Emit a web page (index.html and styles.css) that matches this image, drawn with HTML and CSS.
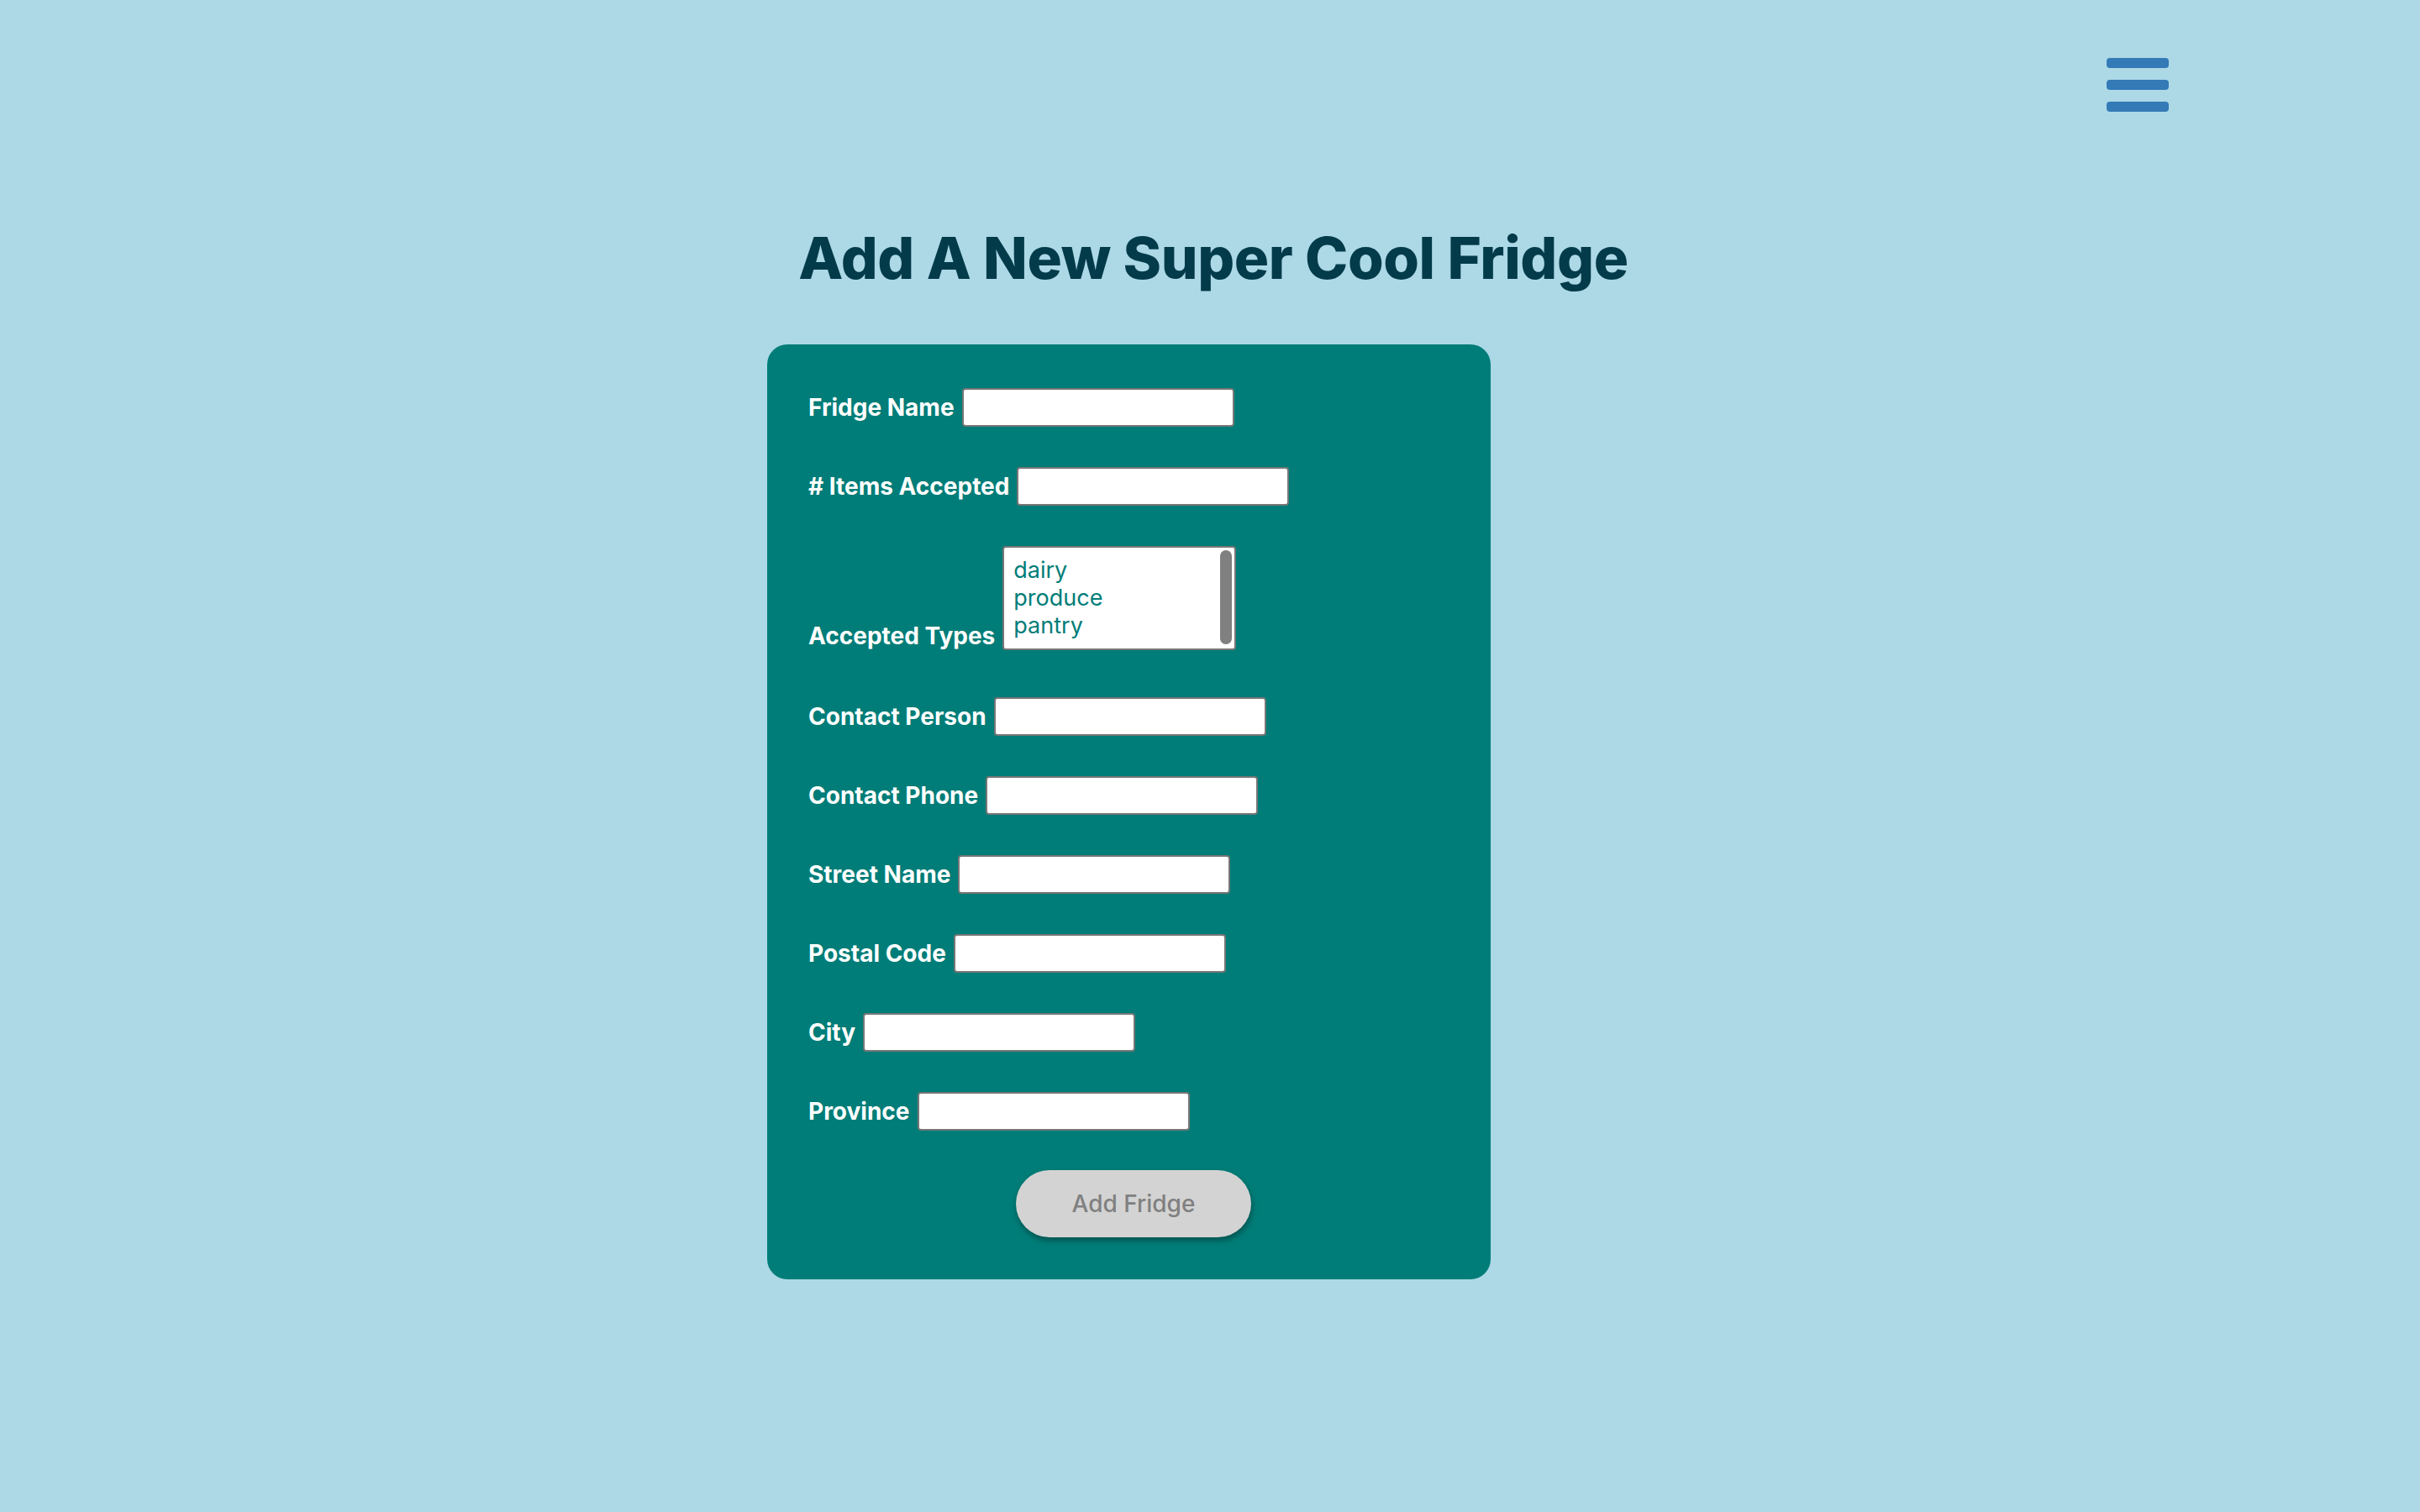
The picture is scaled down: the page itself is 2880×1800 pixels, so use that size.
FILE: index.html
```html
<!DOCTYPE html>
<html lang="en">
<head>
<meta charset="utf-8">
<title>Add A New Super Cool Fridge</title>
<link rel="stylesheet" href="styles.css">
</head>
<body>
<header class="topbar">
  <button class="menu-toggle" aria-label="Menu">
    <span class="bar"></span>
    <span class="bar"></span>
    <span class="bar"></span>
  </button>
</header>
<main>
  <h1 class="title">Add A New Super Cool Fridge</h1>
  <form class="fridge-form">
    <div class="row">
      <label class="label" for="name">Fridge Name</label>
      <input class="field" id="name" type="text">
    </div>
    <div class="row">
      <label class="label" for="items"># Items Accepted</label>
      <input class="field" id="items" type="text">
    </div>
    <div class="row row-select">
      <label class="label">Accepted Types</label>
      <div class="listbox" role="listbox" aria-multiselectable="true">
        <div class="option" role="option">dairy</div>
        <div class="option" role="option">produce</div>
        <div class="option" role="option">pantry</div>
        <span class="thumb"></span>
      </div>
    </div>
    <div class="row">
      <label class="label" for="person">Contact Person</label>
      <input class="field" id="person" type="text">
    </div>
    <div class="row">
      <label class="label" for="phone">Contact Phone</label>
      <input class="field" id="phone" type="text">
    </div>
    <div class="row">
      <label class="label" for="street">Street Name</label>
      <input class="field" id="street" type="text">
    </div>
    <div class="row">
      <label class="label" for="postal">Postal Code</label>
      <input class="field" id="postal" type="text">
    </div>
    <div class="row">
      <label class="label" for="city">City</label>
      <input class="field" id="city" type="text">
    </div>
    <div class="row">
      <label class="label" for="province">Province</label>
      <input class="field" id="province" type="text">
    </div>
    <button class="submit" type="button">Add Fridge</button>
  </form>
</main>
</body>
</html>
```
FILE: styles.css
```css
* { box-sizing: border-box; }

body {
  margin: 0;
  background: #add8e6;
  font-family: "Inter", "Noto Sans", sans-serif;
  min-height: 1800px;
}

.topbar {
  display: flex;
  justify-content: flex-end;
  padding: 69px 299px 0 0;
}

.menu-toggle {
  display: flex;
  flex-direction: column;
  gap: 14px;
  width: 74px;
  padding: 0;
  border: 0;
  background: none;
}

.bar {
  display: block;
  width: 74px;
  height: 12px;
  border-radius: 4px;
  background: #337ab7;
}

.title {
  margin: 134px 0 63px;
  padding-left: 8px;
  text-align: center;
  font-size: 69px;
  line-height: 80px;
  font-weight: 800;
  letter-spacing: -0.4px;
  color: #033b4a;
}

.fridge-form {
  width: 861px;
  margin-left: 913px;
  padding: 52px 49px 50px;
  background: #007d78;
  border-radius: 24px;
  display: flex;
  flex-direction: column;
  gap: 48px;
}

.row {
  display: flex;
  align-items: center;
  gap: 9px;
}

.row-select {
  align-items: flex-end;
  margin-bottom: 8px;
}

.label {
  font-size: 28px;
  line-height: 34px;
  font-weight: 700;
  color: #ffffff;
}

.field {
  width: 324px;
  height: 46px;
  margin: 0;
  border: 2px solid #767676;
  border-radius: 4px;
  background: #ffffff;
}

.listbox {
  position: relative;
  width: 278px;
  height: 124px;
  padding: 10px 0 0 11px;
  border: 2px solid #767676;
  border-radius: 4px;
  background: #ffffff;
}

.option {
  font-size: 27px;
  line-height: 33px;
  color: #007d78;
}

.thumb {
  position: absolute;
  top: 3px;
  right: 3px;
  width: 14px;
  height: 112px;
  border-radius: 7px;
  background: #808080;
}

.submit {
  width: 280px;
  height: 80px;
  margin: -1px 0 0 247px;
  border: 0;
  border-radius: 40px;
  background: #d3d3d3;
  color: #808080;
  font-family: "Inter", "Noto Sans", sans-serif;
  font-size: 28px;
  font-weight: 500;
  box-shadow: 1px 4px 7px rgba(0, 0, 0, 0.35);
}
```
